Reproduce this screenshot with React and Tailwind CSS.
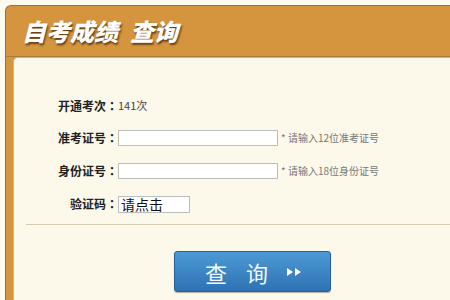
import React from 'react';

const font = { fontFamily: '"Noto Sans CJK SC", "Noto Sans", sans-serif' };
const colonFont = { fontFamily: '"Noto Sans CJK TC", sans-serif' };

const Row = ({ label, h, children }) => (
  <div className={`flex items-center ${h}`}>
    <div className="w-[104px] shrink-0 text-right text-[12px] font-bold text-[#222] leading-none">
      {label}
      <span style={colonFont}>：</span>
    </div>
    {children}
  </div>
);

const App = () => {
  return (
    <div className="w-[450px] h-[300px] overflow-hidden bg-[#fdfaf0] pt-[5px] pl-[5px]" style={font}>
      <div className="h-full rounded-tl-[6px] border-t border-l border-[#9a7038] bg-[#d5953f]">
        <div className="flex h-[51px] items-center pl-[16px] border-b border-[#a77a3e]">
          <h1 className="text-[24px] font-black italic text-white leading-none [text-shadow:1px_2px_2px_rgba(60,35,10,0.75)]">
            自考成绩<span className="ml-[12px]">查询</span>
          </h1>
        </div>
        <div className="ml-[7px] h-full rounded-tl-[5px] border-t border-l border-[#c8b890] bg-[#fcf8ea] pt-[32px]">
          <Row label="开通考次" h="h-[31px]">
            <span className="text-[11px] text-[#444]">141次</span>
          </Row>
          <Row label="准考证号" h="h-[33px]">
            <div className="h-[16px] w-[160px] border border-[#bdbdbd] bg-white" />
            <span className="ml-[3px] text-[10px] text-[#777]">* 请输入12位准考证号</span>
          </Row>
          <Row label="身份证号" h="h-[33px]">
            <div className="h-[16px] w-[160px] border border-[#bdbdbd] bg-white" />
            <span className="ml-[3px] text-[10px] text-[#777]">* 请输入18位身份证号</span>
          </Row>
          <Row label="验证码" h="h-[34px]">
            <div className="flex h-[17px] w-[72px] items-center border border-[#bdbdbd] bg-white pl-[2px] text-[14px] leading-none text-[#111]">
              请点击
            </div>
          </Row>
          <div className="ml-[12px] mt-[3px] h-px bg-[#d6ccae]" />
          <div className="ml-[160px] mt-[26px] flex h-[41px] w-[157px] items-center rounded-[3px] border border-[#2a5f92] bg-gradient-to-b from-[#4d9ad6] to-[#2e72b3] pl-[30px] text-[#f4f8fc] shadow-[0_1px_1px_rgba(0,0,0,0.3)]">
            <span className="text-[22px] leading-none">查</span>
            <span className="ml-[19px] text-[22px] leading-none">询</span>
            <svg className="ml-[18px]" width="16" height="10" viewBox="0 0 16 10">
              <path d="M1 1 L7 5 L1 9 Z" fill="white" />
              <path d="M9 1 L15 5 L9 9 Z" fill="white" />
            </svg>
          </div>
        </div>
      </div>
    </div>
  );
};

export default App;
